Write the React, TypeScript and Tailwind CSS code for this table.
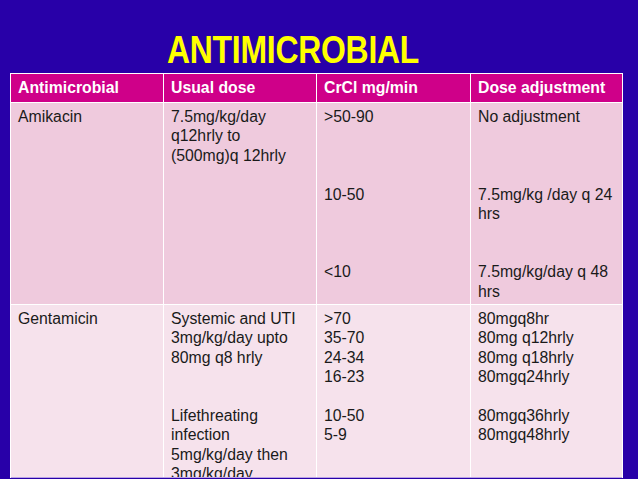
const headers = ['Antimicrobial', 'Usual dose', 'CrCl mg/min', 'Dose adjustment'];

const rows = [
  {
    bg: 'bg-[#efcadd]',
    h: 'h-[202px]',
    cells: [
      'Amikacin',
      '7.5mg/kg/day\nq12hrly to\n(500mg)q 12hrly',
      '>50-90\n\n\n\n10-50\n\n\n\n<10',
      'No adjustment\n\n\n\n7.5mg/kg /day q 24\nhrs\n\n\n7.5mg/kg/day q 48\nhrs',
    ],
  },
  {
    bg: 'bg-[#f6e2ec]',
    h: 'h-[173px]',
    cells: [
      'Gentamicin',
      'Systemic and UTI\n3mg/kg/day upto\n80mg q8 hrly\n\n\nLifethreating\ninfection\n5mg/kg/day then\n3mg/kg/day',
      '>70\n35-70\n24-34\n16-23\n\n10-50\n5-9',
      '80mgq8hr\n80mg q12hrly\n80mg q18hrly\n80mgq24hrly\n\n80mgq36hrly\n80mgq48hrly',
    ],
  },
];

const cols = 'grid grid-cols-[153px_153px_154px_152px]';

export default function App() {
  return (
    <div className="w-[638px] h-[479px] overflow-hidden bg-[#2800a8] font-['Liberation_Sans',Arial,sans-serif]">
      <div className="pt-[31px] pl-[167px] h-[73px]">
        {/* no narrow face installed, so squeeze the bold one */}
        <h1 className="inline-block origin-left scale-x-[0.84] text-[38px] leading-none font-bold text-[#ffff00] tracking-[-0.3px]">
          ANTIMICROBIAL
        </h1>
      </div>

      <div className="ml-[10px] w-[613px] border-t border-l border-r border-white">
        <div className={`${cols} h-[29px] bg-[#cf0089] border-b border-white`}>
          {headers.map((h, i) => (
            <div
              key={h}
              className={`flex items-center pl-[7px] text-white font-bold text-[15.8px] ${i < 3 ? 'border-r border-white' : ''}`}
            >
              {h}
            </div>
          ))}
        </div>

        {rows.map((r, ri) => (
          <div
            key={ri}
            className={`${cols} ${r.h} ${r.bg} ${ri === 0 ? 'border-b border-white' : 'border-b border-[#b9a3e6]'}`}
          >
            {r.cells.map((c, i) => (
              <div
                key={i}
                className={`pl-[7px] pt-[4px] whitespace-pre-line overflow-hidden text-[15.8px] leading-[19.4px] text-[#1a1a1a] ${i < 3 ? 'border-r border-white' : ''}`}
              >
                {c}
              </div>
            ))}
          </div>
        ))}
      </div>
    </div>
  );
}
